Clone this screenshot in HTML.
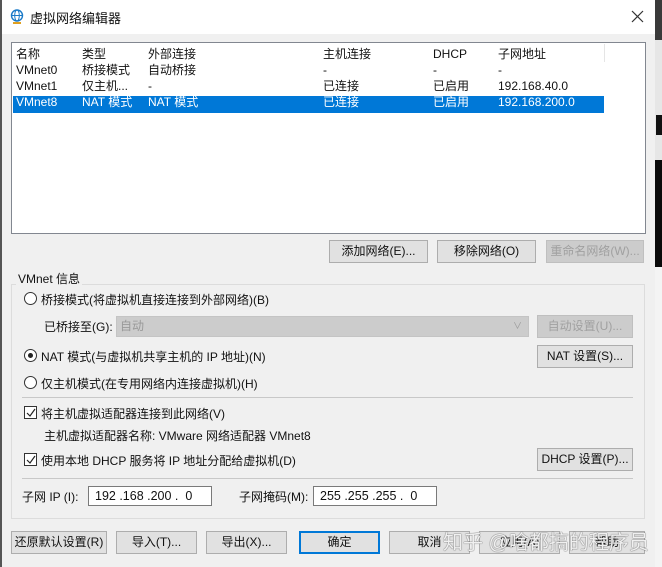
<!DOCTYPE html>
<html><head><meta charset="utf-8"><style>
*{box-sizing:border-box;margin:0;padding:0}
body{width:662px;height:567px;overflow:hidden;background:#f0f0f0;position:relative;font-family:"Liberation Sans","Noto Sans CJK SC",sans-serif;font-size:12px;color:#111}
.a{position:absolute;white-space:nowrap}
.btn{position:absolute;background:#e1e1e1;border:1px solid #adadad;text-align:center;line-height:21px;height:23px}
.dis{color:#a0a0a0;background:#ccc;border-color:#bfbfbf}
.radio{position:absolute;width:13px;height:13px;border:1px solid #333;border-radius:50%;background:#fff}
.chk{position:absolute;width:13px;height:13px;border:1px solid #333;background:#fff}
.inp{position:absolute;background:#fff;border:1px solid #7a7a7a;height:20px;line-height:18px;padding-left:6px;font-size:12.5px}
</style></head><body>
<div class="a" style="left:0;top:0;width:655px;height:34px;background:#fff"></div>
<div class="a" style="left:0;top:0;width:2px;height:567px;background:#555"></div>
<svg class="a" style="left:10px;top:9px" width="14" height="16" viewBox="0 0 14 16"><circle cx="7" cy="6.5" r="5.5" fill="none" stroke="#1a7ac8" stroke-width="1.4"/><ellipse cx="7" cy="6.5" rx="2.3" ry="5.5" fill="none" stroke="#1a7ac8" stroke-width="1"/><line x1="1.5" y1="6.5" x2="12.5" y2="6.5" stroke="#1a7ac8"/><rect x="3" y="13" width="8" height="2" fill="#e0a020"/></svg>
<div class="a" style="left:30px;top:8px;font-size:13px">虚拟网络编辑器</div>
<svg class="a" style="left:631px;top:10px" width="13" height="13"><path d="M1 1L12 12M12 1L1 12" stroke="#333" stroke-width="1.2"/></svg>
<div class="a" style="left:655px;top:0;width:7px;height:40px;background:#3a3a3a"></div>
<div class="a" style="left:655px;top:40px;width:7px;height:120px;background:#e6e6e6"></div>
<div class="a" style="left:656px;top:115px;width:6px;height:20px;background:#111"></div>
<div class="a" style="left:655px;top:160px;width:7px;height:107px;background:#0a0a0a"></div>
<div class="a" style="left:655px;top:267px;width:7px;height:300px;background:#f4f4f4"></div>

<div class="a" style="left:11px;top:42px;width:635px;height:192px;background:#fff;border:1px solid #828790"></div>
<div class="a" style="left:13px;top:96px;width:591px;height:17px;background:#0078d7"></div>
<div class="a" style="left:16px;top:46px;line-height:16px">名称<br>VMnet0<br>VMnet1<br><span style="color:#fff">VMnet8</span></div>
<div class="a" style="left:82px;top:46px;line-height:16px">类型<br>桥接模式<br>仅主机...<br><span style="color:#fff">NAT 模式</span></div>
<div class="a" style="left:148px;top:46px;line-height:16px">外部连接<br>自动桥接<br>-<br><span style="color:#fff">NAT 模式</span></div>
<div class="a" style="left:323px;top:46px;line-height:16px">主机连接<br>-<br>已连接<br><span style="color:#fff">已连接</span></div>
<div class="a" style="left:433px;top:46px;line-height:16px">DHCP<br>-<br>已启用<br><span style="color:#fff">已启用</span></div>
<div class="a" style="left:498px;top:46px;line-height:16px">子网地址<br>-<br>192.168.40.0<br><span style="color:#fff">192.168.200.0</span></div>
<div class="a" style="left:604px;top:44px;width:1px;height:18px;background:#e5e5e5"></div>

<div class="btn" style="left:329px;top:240px;width:99px">添加网络(E)...</div>
<div class="btn" style="left:437px;top:240px;width:99px">移除网络(O)</div>
<div class="btn dis" style="left:546px;top:240px;width:98px">重命名网络(W)...</div>

<div class="a" style="left:11px;top:284px;width:634px;height:235px;border:1px solid #dcdcdc"></div>
<div class="a" style="left:16px;top:270px;background:#f0f0f0;padding:0 2px">VMnet 信息</div>

<div class="radio" style="left:24px;top:292px"></div>
<div class="a" style="left:41px;top:291px">桥接模式(将虚拟机直接连接到外部网络)(B)</div>
<div class="a" style="left:44px;top:318px">已桥接至(G):</div>
<div class="a" style="left:116px;top:316px;width:413px;height:21px;background:#ccc;border:1px solid #c4c4c4;color:#999;padding-left:3px;line-height:19px">自动<span style="position:absolute;right:6px;font-size:9px">∨</span></div>
<div class="btn dis" style="left:537px;top:315px;width:96px">自动设置(U)...</div>

<div class="radio" style="left:24px;top:349px"></div>
<div class="a" style="left:28px;top:353px;width:5px;height:5px;border-radius:50%;background:#222"></div>
<div class="a" style="left:41px;top:348px">NAT 模式(与虚拟机共享主机的 IP 地址)(N)</div>
<div class="btn" style="left:537px;top:345px;width:96px">NAT 设置(S)...</div>

<div class="radio" style="left:24px;top:376px"></div>
<div class="a" style="left:41px;top:375px">仅主机模式(在专用网络内连接虚拟机)(H)</div>
<div class="a" style="left:22px;top:397px;width:611px;height:1px;background:#c8c8c8"></div>

<div class="chk" style="left:24px;top:406px"></div>
<svg class="a" style="left:26px;top:408px" width="10" height="10"><path d="M1 5L4 8L9 1" fill="none" stroke="#222" stroke-width="1.2"/></svg>
<div class="a" style="left:41px;top:405px">将主机虚拟适配器连接到此网络(V)</div>
<div class="a" style="left:44px;top:427px">主机虚拟适配器名称: VMware 网络适配器 VMnet8</div>
<div class="chk" style="left:24px;top:453px"></div>
<svg class="a" style="left:26px;top:455px" width="10" height="10"><path d="M1 5L4 8L9 1" fill="none" stroke="#222" stroke-width="1.2"/></svg>
<div class="a" style="left:41px;top:452px">使用本地 DHCP 服务将 IP 地址分配给虚拟机(D)</div>
<div class="btn" style="left:537px;top:448px;width:96px">DHCP 设置(P)...</div>
<div class="a" style="left:22px;top:478px;width:611px;height:1px;background:#c8c8c8"></div>

<div class="a" style="left:22px;top:488px">子网 IP (I):</div>
<div class="inp" style="left:88px;top:486px;width:124px">192 .168 .200 .&nbsp; 0</div>
<div class="a" style="left:239px;top:488px">子网掩码(M):</div>
<div class="inp" style="left:313px;top:486px;width:124px">255 .255 .255 .&nbsp; 0</div>

<div class="btn" style="left:11px;top:531px;width:96px">还原默认设置(R)</div>
<div class="btn" style="left:116px;top:531px;width:81px">导入(T)...</div>
<div class="btn" style="left:206px;top:531px;width:81px">导出(X)...</div>
<div class="btn" style="left:299px;top:531px;width:81px;border:2px solid #0078d7;line-height:19px">确定</div>
<div class="btn" style="left:389px;top:531px;width:81px">取消</div>
<div class="btn" style="left:479px;top:531px;width:81px">应用(A)</div>
<div class="btn" style="left:569px;top:531px;width:76px">帮助</div>
<div class="a" style="left:443px;top:526px;font-size:20px;color:rgba(255,255,255,0.9);text-shadow:0 0 1px #666,0 0 1px #666">知乎 @啥都搞的程序员</div>
</body></html>
